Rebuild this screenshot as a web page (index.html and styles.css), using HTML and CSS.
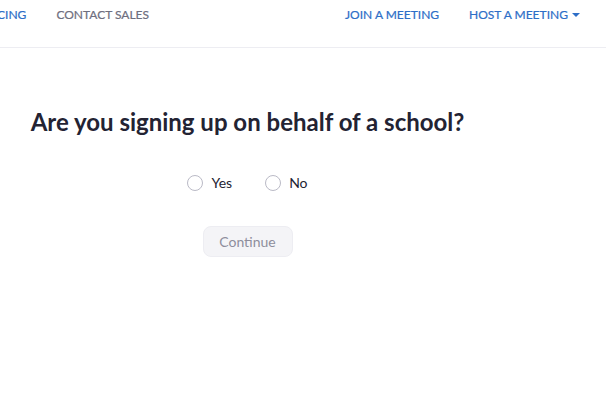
FILE: index.html
```html
<!DOCTYPE html>
<html>
<head>
<meta charset="utf-8">
<link rel="stylesheet" href="styles.css">
</head>
<body>
<header class="topbar">
  <nav class="nav nav-left">
    <a class="nav-link active">Pricing</a>
    <a class="nav-link">Contact Sales</a>
  </nav>
  <nav class="nav nav-right">
    <a class="nav-link active">Join a Meeting</a>
    <a class="nav-link active">Host a Meeting <span class="caret"></span></a>
  </nav>
</header>
<main class="content">
  <h1 class="title">Are you signing up on behalf of a school?</h1>
  <div class="choices">
    <label class="choice"><span class="radio"></span>Yes</label>
    <label class="choice"><span class="radio"></span>No</label>
  </div>
  <button class="continue">Continue</button>
</main>
</body>
</html>
```
FILE: styles.css
```css
html, body {
  margin: 0;
  padding: 0;
  background: #fff;
  font-family: Lato, "Open Sans", sans-serif;
  overflow: hidden;
}
.topbar {
  height: 47px;
  border-bottom: 1px solid #ededf2;
  display: flex;
  justify-content: space-between;
  align-items: flex-start;
}
.nav {
  display: flex;
  gap: 30px;
  padding-top: 7px;
}
.nav-left {
  margin-left: -21px;
}
.nav-right {
  margin-right: 26px;
}
.nav-link {
  font-size: 12px;
  line-height: 16px;
  text-transform: uppercase;
  color: #6e6e7e;
  white-space: nowrap;
  -webkit-text-stroke: 0.2px currentColor;
}
.nav-link.active {
  color: #2d6ec7;
}
.caret {
  display: inline-block;
  width: 0;
  height: 0;
  border-left: 4px solid transparent;
  border-right: 4px solid transparent;
  border-top: 4px solid #2d6ec7;
  vertical-align: middle;
  margin-left: 1px;
  margin-top: -2px;
}
.content {
  width: 495px;
  display: flex;
  flex-direction: column;
  align-items: center;
}
.title {
  margin: 59px 0 0;
  font-size: 24px;
  font-weight: 700;
  line-height: 29px;
  color: #232333;
}
.choices {
  display: flex;
  gap: 33px;
  margin-top: 38px;
}
.choice {
  display: flex;
  align-items: center;
  gap: 8px;
  font-size: 14px;
  color: #232333;
  line-height: 18px;
}
.radio {
  width: 14px;
  height: 14px;
  border: 1px solid #babac6;
  border-radius: 50%;
  background: #fff;
}
.continue {
  margin-top: 34px;
  width: 90px;
  height: 31px;
  border: 1px solid #ededf2;
  border-radius: 8px;
  background: #f4f4f7;
  color: #8e8e9c;
  font-family: Lato, sans-serif;
  font-size: 14px;
  padding: 0;
}
```
